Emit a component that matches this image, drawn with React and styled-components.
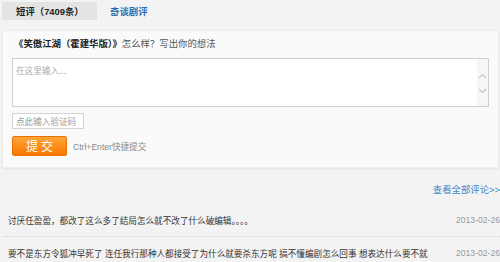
import React from "react";
import styled, { createGlobalStyle } from "styled-components";

const Global = createGlobalStyle`
  html, body { margin: 0; padding: 0; background: #f3f3f3; }
  body { width: 500px; overflow: hidden; font-family: "Liberation Sans", "Noto Sans CJK SC", sans-serif; }
`;

const Page = styled.div`
  padding: 2px 0 0 2px;
  width: 498px;
`;

const Tabs = styled.div`
  display: flex;
  align-items: stretch;
  height: 18px;
`;

const Tab = styled.div`
  display: flex;
  align-items: center;
  box-sizing: border-box;
  width: ${(p) => (p.$active ? "95px" : "auto")};
  padding-left: ${(p) => (p.$active ? "14px" : "13px")};
  background: ${(p) => (p.$active ? "#e4e4e4" : "transparent")};
  color: ${(p) => (p.$active ? "#222" : "#2c6db3")};
  font-weight: bold;
  font-size: 9.4px;
`;

const Panel = styled.div`
  margin-top: 10px;
  box-sizing: border-box;
  width: 497px;
  background: #fafafa;
  border: 1px solid #eeeeee;
  box-shadow: 0 1px 2px rgba(0, 0, 0, 0.07);
  padding: 5px 0 11px 9px;
`;

const Title = styled.div`
  font-size: 9.4px;
  line-height: 16px;
  color: #555;
  padding-left: 2px;
  b { color: #222; }
`;

const Editor = styled.div`
  margin-top: 6px;
  display: flex;
  box-sizing: border-box;
  width: 477px;
  height: 49px;
  background: #fff;
  border: 1px solid #cfcfcf;
`;

const Area = styled.textarea`
  flex: 1;
  border: none;
  outline: none;
  resize: none;
  background: transparent;
  padding: 5px 3px;
  font-family: "Noto Sans CJK SC", sans-serif;
  font-size: 8.6px;
  line-height: 12px;
  color: #333;
  &::placeholder { color: #aaa; }
`;

const Scroll = styled.div`
  width: 11px;
  background: #f6f6f6;
  display: flex;
  flex-direction: column;
  justify-content: center;
  align-items: center;
  gap: 9px;
  padding-top: 1px;
`;

const Captcha = styled.input`
  display: block;
  margin-top: 6px;
  box-sizing: border-box;
  width: 72px;
  height: 16px;
  border: 1px solid #d4d4d4;
  background: #fff;
  padding: 0 3px;
  outline: none;
  font-family: "Noto Sans CJK SC", sans-serif;
  font-size: 8.6px;
  &::placeholder { color: #999; }
`;

const Actions = styled.div`
  margin-top: 7px;
  display: flex;
  align-items: center;
  gap: 6px;
`;

const Submit = styled.button`
  box-sizing: border-box;
  width: 55px;
  height: 20px;
  border: 1px solid #e86f00;
  border-radius: 2px;
  background: linear-gradient(#ffa437, #f67800);
  color: #fff;
  font-family: "Noto Sans CJK SC", sans-serif;
  font-size: 12px;
  letter-spacing: 3px;
  padding: 0 0 0 3px;
  line-height: 18px;
`;

const Hint = styled.span`
  color: #888;
  font-size: 8.6px;
`;

const More = styled.div`
  margin-top: 14px;
  text-align: right;
  font-size: 9.4px;
  line-height: 16px;
  color: #3d86c6;
  white-space: nowrap;
`;

const List = styled.div`
  margin-top: 6px;
  padding-left: 1px;
`;

const Row = styled.div`
  display: flex;
  align-items: center;
  justify-content: space-between;
  height: 32px;
  padding-left: 5px;
  border-bottom: 1px dotted #d6d6d6;
  font-size: 8.6px;
  white-space: nowrap;
`;

const Text = styled.span`
  color: #333;
`;

const Date = styled.span`
  color: #999;
`;

const Chevron = ({ up }) => (
  <svg width="9" height="6" viewBox="0 0 9 6">
    <path
      d={up ? "M1 5 L4.5 1.5 L8 5" : "M1 1 L4.5 4.5 L8 1"}
      fill="none"
      stroke="#c4c4c4"
      strokeWidth="1.2"
    />
  </svg>
);

const comments = [
  { text: "讨厌任盈盈，都改了这么多了结局怎么就不改了什么破编辑。。。。", date: "2013-02-26" },
  {
    text: "要不是东方令狐冲早死了 连任我行那种人都接受了为什么就要杀东方呢 搞不懂编剧怎么回事 想表达什么要不就",
    date: "2013-02-26",
  },
];

export default function App() {
  return (
    <>
      <Global />
      <Page>
        <Tabs>
          <Tab $active>短评（7409条）</Tab>
          <Tab>奇谈剧评</Tab>
        </Tabs>
        <Panel>
          <Title>
            <b>《笑傲江湖（霍建华版）》</b>怎么样？写出你的想法
          </Title>
          <Editor>
            <Area placeholder="在这里输入..." />
            <Scroll>
              <Chevron up />
              <Chevron />
            </Scroll>
          </Editor>
          <Captcha placeholder="点此输入验证码" />
          <Actions>
            <Submit>提交</Submit>
            <Hint>Ctrl+Enter快捷提交</Hint>
          </Actions>
        </Panel>
        <More>查看全部评论&gt;&gt;</More>
        <List>
          {comments.map((c, i) => (
            <Row key={i}>
              <Text>{c.text}</Text>
              <Date>{c.date}</Date>
            </Row>
          ))}
        </List>
      </Page>
    </>
  );
}
